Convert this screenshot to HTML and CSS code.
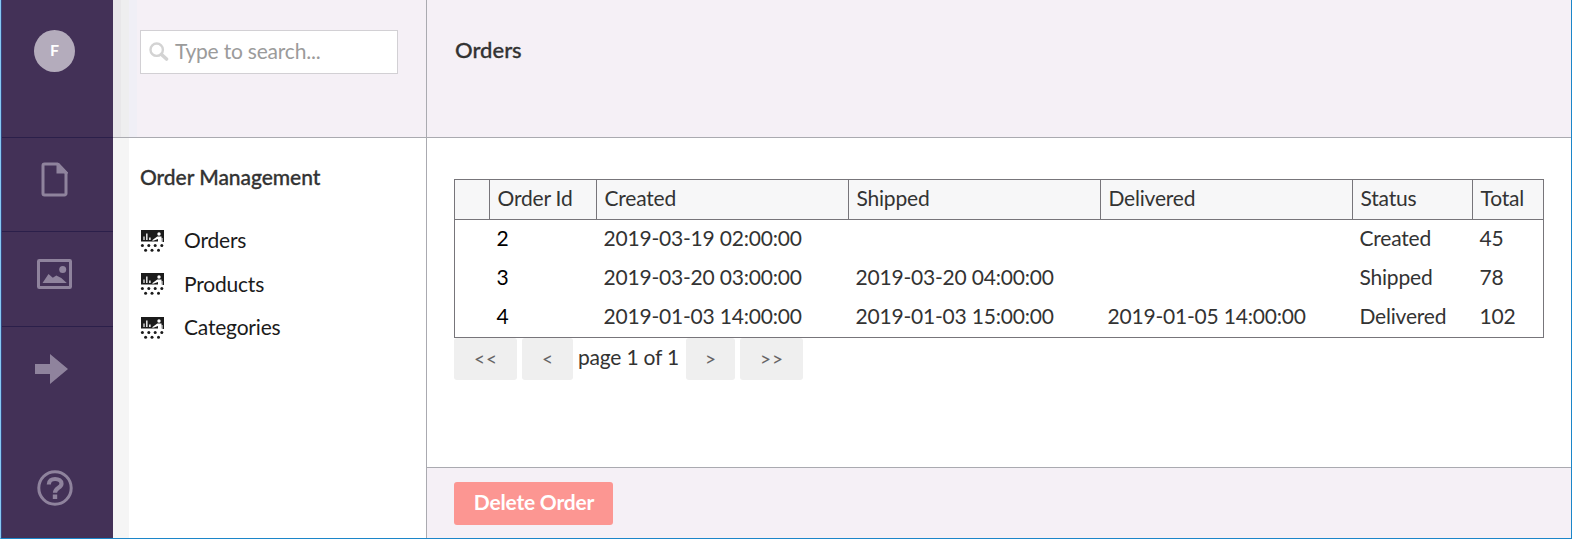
FILE: index.html
```html
<!DOCTYPE html>
<html lang="en">
<head>
<meta charset="utf-8">
<title>Orders</title>
<link rel="stylesheet" href="styles.css">
</head>
<body>
<svg class="defs" width="0" height="0" aria-hidden="true">
  <symbol id="training" viewBox="0 0 24 24">
    <path fill="#1b1b1b" d="M1 1h23v12h-1.500V9h-1v3.500H1z"/>
    <path fill="#ddd" d="M3.300 7.500h1.400v3.500h-1.400zM6 4.500h1.600V11H6zM9 8.500h1.700V11H9z"/>
    <circle cx="19" cy="5" r="1.700" fill="#fff"/>
    <path fill="#fff" d="M17.300 7.500h4.200V13h-3.500v-3l-5.500 2v-1.100z"/>
    <g fill="#1b1b1b"><circle cx="2.400" cy="16.500" r="1.500"/><circle cx="8.800" cy="16.500" r="1.500"/><circle cx="15.200" cy="16.500" r="1.500"/><circle cx="21.800" cy="16.500" r="1.500"/><circle cx="5.600" cy="21.200" r="1.500"/><circle cx="12" cy="21.200" r="1.500"/><circle cx="18.500" cy="21.200" r="1.500"/></g>
  </symbol>
</svg>
<div class="app">
  <nav class="sections">
    <div class="user"><span class="avatar">F</span></div>
    <a class="section"><svg width="28" height="35" viewBox="0 0 28 35"><path fill="none" stroke="currentColor" stroke-width="3" stroke-linejoin="round" d="M3.500 2h13l8.500 9v20.500a1.500 1.500 0 0 1-1.500 1.500h-20A1.500 1.500 0 0 1 2 31.500v-28A1.500 1.500 0 0 1 3.500 2z"/><path fill="currentColor" d="M15.500 1h2.500l9 9.500v1H15.500z"/></svg></a>
    <a class="section"><svg width="35" height="30" viewBox="0 0 35 30"><rect x="1.500" y="1.500" width="32" height="27" rx=".8" fill="none" stroke="currentColor" stroke-width="3"/><circle cx="25.700" cy="10.500" r="3.500" fill="currentColor"/><path fill="currentColor" d="M5.500 24l6-9 4.300 3.800 3.500-2.300 5 2.500 5.500 5z"/></svg></a>
    <a class="section arrow"><svg width="33" height="30" viewBox="0 0 33 30"><path fill="currentColor" d="M0 10h15V0l18 15-18 15V20H0z"/></svg></a>
    <a class="section help"><svg width="36" height="36" viewBox="0 0 36 36"><circle cx="18" cy="18" r="16.200" fill="none" stroke="currentColor" stroke-width="3"/><path fill="none" stroke="currentColor" stroke-width="4.200" d="M11.800 14.500c0-3.600 2.600-5.500 6.300-5.500s6.400 1.700 6.400 4.700c0 4.300-6.500 3.800-6.500 9"/><rect x="15.800" y="24.500" width="4.400" height="4.500" fill="currentColor"/></svg></a>
  </nav>
  <aside class="tree">
    <header class="bar search-bar">
      <label class="search">
        <svg width="20" height="20" viewBox="0 0 20 20"><circle cx="7.700" cy="7.700" r="6.200" fill="none" stroke="#d3d3d3" stroke-width="2.400"/><path d="M12.500 12.500l5 4.500" stroke="#d3d3d3" stroke-width="3.600" stroke-linecap="round"/></svg>
        <span>Type to search...</span>
      </label>
    </header>
    <div class="tree-body">
      <h2 class="tree-title">Order Management</h2>
      <ul class="nodes">
        <li><svg width="24" height="24"><use href="#training"/></svg><span>Orders</span></li>
        <li><svg width="24" height="24"><use href="#training"/></svg><span>Products</span></li>
        <li><svg width="24" height="24"><use href="#training"/></svg><span>Categories</span></li>
      </ul>
    </div>
  </aside>
  <main class="editor">
    <header class="bar title-bar"><h1>Orders</h1></header>
    <section class="content">
      <table class="orders">
        <colgroup><col class="c-check"><col class="c-id"><col class="c-date"><col class="c-date"><col class="c-date"><col class="c-status"><col></colgroup>
        <thead><tr><th></th><th>Order Id</th><th>Created</th><th>Shipped</th><th>Delivered</th><th>Status</th><th>Total</th></tr></thead>
        <tbody>
          <tr><td></td><td class="id">2</td><td>2019-03-19 02:00:00</td><td></td><td></td><td>Created</td><td>45</td></tr>
          <tr><td></td><td class="id">3</td><td>2019-03-20 03:00:00</td><td>2019-03-20 04:00:00</td><td></td><td>Shipped</td><td>78</td></tr>
          <tr><td></td><td class="id">4</td><td>2019-01-03 14:00:00</td><td>2019-01-03 15:00:00</td><td>2019-01-05 14:00:00</td><td>Delivered</td><td>102</td></tr>
        </tbody>
      </table>
      <div class="pager">
        <button class="wide">&lt;&lt;</button><button>&lt;</button><span>page 1 of 1</span><button class="next">&gt;</button><button class="wide">&gt;&gt;</button>
      </div>
    </section>
    <footer class="actions"><button class="delete">Delete Order</button></footer>
  </main>
</div>
</body>
</html>
```
FILE: styles.css
```css
* { box-sizing: border-box; }
body { margin: 0; font-family: Lato, sans-serif; font-size: 21px; letter-spacing: -.2px; color: #333; }
h1, h2, ul { margin: 0; padding: 0; font-weight: 400; }
button { border: 0; padding: 0; font-family: inherit; }
.defs { display: block; }
svg { display: block; flex: none; }
.app { display: flex; width: 1572px; height: 539px; overflow: hidden; border: 1px solid #1c86c9; border-top: 0; border-left-color: #85c8f2; background: #fff; }

.sections { width: 112px; flex: none; display: flex; flex-direction: column; background: #433157; color: #8f839d; border-left: 1px solid #37457c; }
.user { height: 138px; padding: 30px 0 0 32px; border-bottom: 1px solid #2b1f4a; }
.avatar { display: flex; align-items: center; justify-content: center; width: 41px; height: 42px; border-radius: 50%; background: #b4acbc; color: #fff; font-size: 16px; font-weight: 700; padding-bottom: 4px; }
.section { height: 94px; padding-right: 6px; padding-bottom: 11px; display: flex; align-items: center; justify-content: center; border-bottom: 1px solid #2b1f4a; }
.section + .section { height: 95px; padding-right: 7px; }
.section + .section.arrow { border: 0; padding-right: 12px; padding-bottom: 12px; }
.section + .section.help { margin-top: auto; height: 101px; border: 0; padding-bottom: 0; padding-right: 6px; }

.tree { width: 314px; flex: none; border-right: 1px solid #aaaab0; }
.bar { height: 138px; background: #f5f0f6; border-bottom: 1px solid #aaaab0; }
.search-bar { padding: 30px 0 0 27px; background: linear-gradient(90deg, #e8e7e9 0 8px, #eeeeef 8px 16px, #f0eff6 16px 24px, #f5f0f6 24px); }
.search { display: flex; align-items: center; gap: 6px; width: 258px; height: 44px; padding-left: 8px; background: #fff; border: 1px solid #d2d0d4; color: #9b9b9b; }
.search span { padding-bottom: 3px; }
.tree-body { height: 400px; padding: 26px 0 0 27px; background: linear-gradient(90deg, #f5f5f5 0 16px, #fff 16px); }
.tree-title { font-size: 21px; line-height: 26px; font-weight: 500; letter-spacing: -.05px; -webkit-text-stroke: .3px #333; }
.nodes { list-style: none; padding-top: 29px; color: #1b1b1b; }
.nodes li { display: flex; align-items: center; gap: 20px; height: 43.500px; }
.nodes span { padding-bottom: 2px; }

.editor { flex: 1; display: flex; flex-direction: column; min-width: 0; }
.title-bar { padding: 37px 0 0 28px; }
.title-bar h1 { font-size: 22px; line-height: 26px; font-weight: 500; letter-spacing: 0; -webkit-text-stroke: .3px #333; }
.content { flex: 1; padding: 41px 0 0 27px; }
.orders { width: 1090px; table-layout: fixed; border-collapse: separate; border-spacing: 0; border: 1px solid #77757a; }
.c-check { width: 34px; } .c-id { width: 107px; } .c-date { width: 252px; } .c-status { width: 120px; }
.orders th, .orders td { padding: 0 0 0 7.500px; text-align: left; font-weight: 400; white-space: nowrap; }
.orders th { height: 40px; background: #f7f7f8; border-left: 1px solid #77757a; border-bottom: 1px solid #77757a; padding-bottom: 4px; }
.orders th:first-child { border-left: 0; }
.orders td { height: 39px; padding-bottom: 4px; }
.orders .id { color: #000; }
.pager { display: flex; gap: 5px; height: 42px; }
.pager button { width: 51px; background: #efefef; border-radius: 3px; color: #666; font-size: 19px; letter-spacing: 1px; padding: 0 0 2px 1px; }
.pager button.wide { width: 63px; }
.pager button.next { width: 49px; }
.pager span { padding-top: 6px; line-height: 26px; width: 103px; white-space: nowrap; }
.actions { height: 71px; flex: none; background: #f5f0f6; border-top: 1px solid #aaaab0; padding: 14px 0 0 27px; }
.delete { width: 159px; height: 43px; border-radius: 3px; background: #fc9692; color: #fff; font-size: 21px; font-weight: 700; letter-spacing: -.2px; padding: 0 0 4px 1px; }
```
